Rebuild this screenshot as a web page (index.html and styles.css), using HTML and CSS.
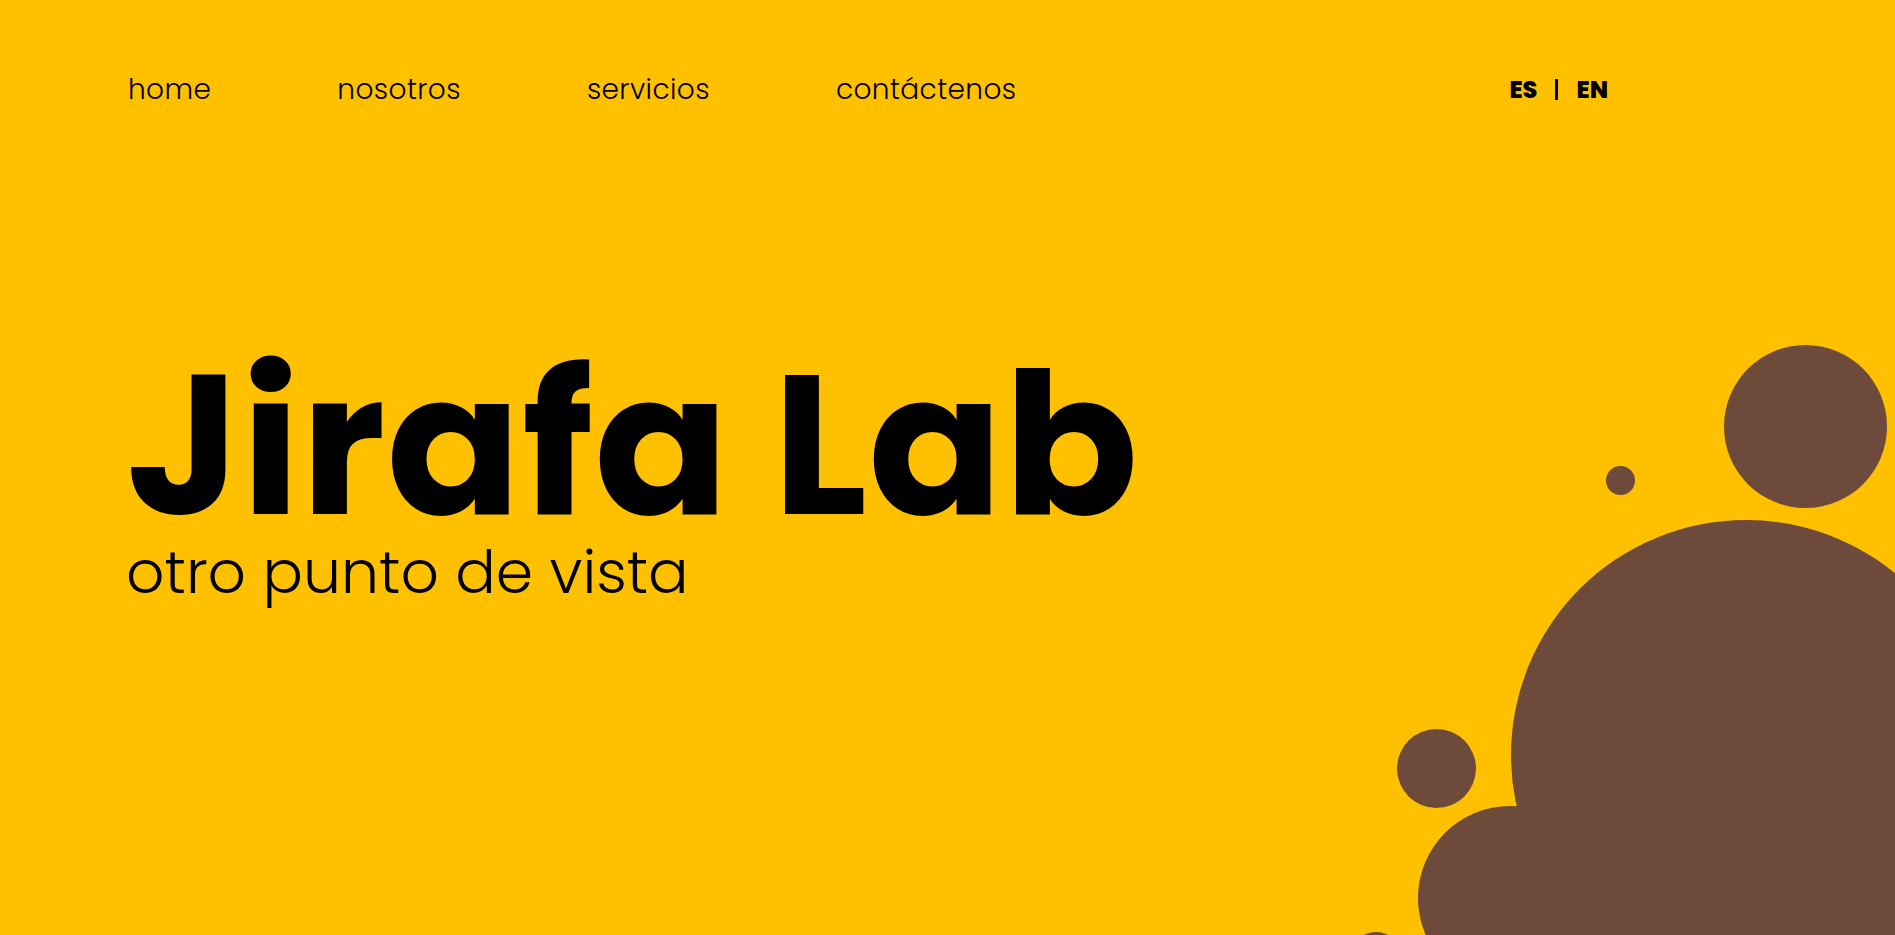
FILE: index.html
```html
<!DOCTYPE html>
<html lang="es">
<head>
<meta charset="utf-8">
<title>Jirafa Lab</title>
<link rel="stylesheet" href="styles.css">
</head>
<body>
<div class="page">
  <header class="topbar">
    <nav class="menu">
      <a class="menu-link" href="#">home</a>
      <a class="menu-link" href="#">nosotros</a>
      <a class="menu-link" href="#">servicios</a>
      <a class="menu-link" href="#">contáctenos</a>
    </nav>
    <div class="lang">
      <a class="lang-link" href="#">ES</a>
      <span class="lang-sep"></span>
      <a class="lang-link" href="#">EN</a>
    </div>
  </header>
  <section class="hero">
    <h1 class="hero-title">Jirafa Lab</h1>
    <p class="hero-sub">otro punto de vista</p>
  </section>
  <div class="bubbles" aria-hidden="true">
    <span class="bubble b-top"></span>
    <span class="bubble b-dot"></span>
    <span class="bubble b-big"></span>
    <span class="bubble b-mid"></span>
    <span class="bubble b-low"></span>
    <span class="bubble b-tiny"></span>
  </div>
</div>
</body>
</html>
```
FILE: styles.css
```css
* { box-sizing: border-box; }
html, body { margin: 0; padding: 0; }
body {
  background: #ffc000;
  color: #000;
  font-family: "Poppins", Inter, "Liberation Sans", sans-serif;
  overflow: hidden;
}
.page {
  position: relative;
  width: 100%;
  height: 935px;
  overflow: hidden;
}
.topbar {
  display: flex;
  align-items: flex-start;
  padding: 73px 0 0 128px;
  height: 118px;
}
.menu {
  display: flex;
  gap: 126px;
}
.menu-link {
  color: #000;
  text-decoration: none;
  font-size: 28px;
  font-weight: 300;
  letter-spacing: 0.4px;
  line-height: 34px;
}
.lang {
  margin-left: auto;
  margin-right: 287px;
  display: flex;
  align-items: center;
  gap: 18px;
  font-size: 24px;
  font-weight: 800;
  line-height: 34px;
  height: 34px;
}
.lang-link { color: #000; text-decoration: none; }
.lang-sep {
  display: block;
  width: 3px;
  height: 21px;
  background: #000;
  margin-top: -1px;
}
.hero {
  padding: 237px 0 0 126px;
}
.hero-title {
  margin: 0;
  font-size: 198px;
  font-weight: 700;
  letter-spacing: 1px;
  line-height: 180px;
}
.hero-sub {
  margin: 0;
  font-size: 60px;
  font-weight: 300;
  line-height: 75px;
}
.bubbles {
  position: absolute;
  inset: 0;
  pointer-events: none;
}
.bubble {
  position: absolute;
  border-radius: 50%;
  background: #6e4a3b;
}
.b-top  { left: 1724px; top: 345px; width: 163px; height: 163px; }
.b-dot  { left: 1606px; top: 466px; width: 29px;  height: 29px; }
.b-big  { left: 1511px; top: 520px; width: 470px; height: 470px; }
.b-mid  { left: 1397px; top: 729px; width: 79px;  height: 79px; }
.b-low  { left: 1418px; top: 806px; width: 184px; height: 184px; }
.b-tiny { left: 1348px; top: 932px; width: 56px;  height: 56px; }
```
